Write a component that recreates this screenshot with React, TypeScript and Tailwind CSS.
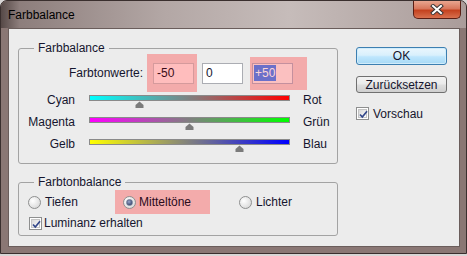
import React from 'react';

type Slider = { left: string; right: string; value: number; bar: string };

const sliders: Slider[] = [
    { left: 'Cyan', right: 'Rot', value: -50, bar: 'bg-[linear-gradient(to_right,#00ffff,#ff0000)]' },
    { left: 'Magenta', right: 'Grün', value: 0, bar: 'bg-[linear-gradient(to_right,#ff00ff,#00ff00)]' },
    { left: 'Gelb', right: 'Blau', value: 50, bar: 'bg-[linear-gradient(to_right,#ffff00,#0000ff)]' },
];

const Checkbox = () => (
    <span className="w-[13px] h-[13px] border border-[#8e8f8f] bg-white p-[1px] flex shrink-0">
        <span className="flex-1 border border-[#c4c4c4] bg-[linear-gradient(135deg,#d8d8d8,#fdfdfd)] relative">
            <svg className="absolute -left-[1px] -top-[1px]" width="11" height="11" viewBox="0 0 11 11">
                <path d="M2 5.5 L4.3 8 L9 2.2" fill="none" stroke="#34488a" strokeWidth="1.7" />
            </svg>
        </span>
    </span>
);

const Radio = ({ checked }: { checked?: boolean }) => (
    <span className="w-[13px] h-[13px] rounded-full border border-[#8e8f8f] bg-[radial-gradient(circle_at_35%_35%,#ffffff,#d0d0d0)] flex items-center justify-center shrink-0">
        {checked && (
            <span className="w-[7px] h-[7px] rounded-full border border-[#6d7894] bg-[radial-gradient(circle_at_40%_35%,#9aa8cc,#1c2a55)]" />
        )}
    </span>
);

// slider track with its value marker underneath
const SliderRow = ({ s }: { s: Slider }) => (
    <div className="flex h-[22px]">
        <span className="w-[56px] text-right leading-[14px] -mt-[2px]">{s.left}</span>
        <div className="ml-[14px] w-[201px] relative">
            <div className={`h-[6px] border border-[#8a8a8a] ${s.bar}`} />
            <svg
                className="absolute top-[6px]"
                style={{ left: 100 + s.value - 4.5 }}
                width="9"
                height="7"
                viewBox="0 0 9 7"
            >
                <path d="M4.5 0.5 L8.5 4 V7 H0.5 V4 Z" fill="#7b7b7b" />
            </svg>
        </div>
        <span className="ml-[13px] leading-[14px] -mt-[2px]">{s.right}</span>
    </div>
);

export default function App() {
    return (
        <div className="w-[467px] h-[256px] bg-[#d9d6d6] font-['Liberation_Sans',Arial,sans-serif] text-[12px] text-[#15152e]">
            <div className="w-[467px] h-[254px] rounded-t-[7px] border border-[#3a2f2e] bg-[#8a7774] flex flex-col overflow-hidden">
                {/* Title bar */}
                <div className="h-[27px] flex items-start bg-[linear-gradient(to_right,#564947_0%,#8d7e7c_4%,#b3a7a5_35%,#c6bcba_62%,#aa9c9a_100%)]">
                    <span className="ml-[7px] mt-[7px] leading-[14px] text-black">Farbbalance</span>
                    <button className="ml-auto mr-[5px] w-[48px] h-[18px] rounded-b-[5px] border border-t-0 border-[#5a1e14] bg-[linear-gradient(to_bottom,#e9a690_0%,#d8775c_45%,#c4421f_55%,#d8704e_100%)] flex items-center justify-center">
                        <svg width="14" height="11" viewBox="0 0 14 11">
                            <path d="M3 2 L11 9 M11 2 L3 9" stroke="#3b3535" strokeWidth="4" strokeLinecap="square" />
                            <path d="M3 2 L11 9 M11 2 L3 9" stroke="#ffffff" strokeWidth="2" strokeLinecap="square" />
                        </svg>
                    </button>
                </div>

                {/* Client area */}
                <div className="ml-[7px] w-[452px] h-[219px] border border-[#6a5d5b] bg-[#ececec] flex pl-[9px] pt-[12px]">
                    <div className="w-[320px] flex flex-col">
                        <fieldset className="border border-[#a3a3a3] rounded-[3px] p-0 pb-[2px]">
                            <legend className="ml-[15px] px-[4px] leading-[14px]">Farbbalance</legend>
                            <div className="flex items-center h-[38px] -mt-[1px]">
                                <span className="w-[124px] text-right">Farbtonwerte:</span>
                                <div className="ml-[4px] w-[50px] h-[38px] bg-[#f3abab] flex items-center pl-[6px]">
                                    <div className="w-[41px] h-[21px] border border-[#d59a9c] bg-[#ffbdbd] px-[3px] flex items-center text-[#3a0c18]">
                                        -50
                                    </div>
                                </div>
                                <div className="ml-[5px] w-[41px] h-[21px] border border-[#abadb3] bg-white px-[3px] flex items-center">
                                    0
                                </div>
                                <div className="ml-[7px] w-[57px] h-[33px] bg-[#f3abab] flex items-center pl-[2px]">
                                    <div className="w-[41px] h-[21px] border border-[#c4909e] bg-[#fbc0c0] px-[1px] flex items-center">
                                        <span className="bg-[#6b70c9] text-[#fbd6d6] px-[1px] leading-[16px]">+50</span>
                                    </div>
                                </div>
                            </div>
                            <div className="mt-[3px] flex flex-col">
                                {sliders.map((s) => (
                                    <SliderRow key={s.left} s={s} />
                                ))}
                            </div>
                        </fieldset>

                        <fieldset className="mt-[11px] border border-[#a3a3a3] rounded-[3px] p-0 pb-[5px]">
                            <legend className="ml-[15px] px-[4px] leading-[14px]">Farbtonbalance</legend>
                            <div className="mt-[1px] h-[24px] flex items-center pl-[9px]">
                                <label className="w-[87px] flex items-center gap-[4px]">
                                    <Radio />
                                    Tiefen
                                </label>
                                <label className="w-[95px] h-[24px] bg-[#f3abab] flex items-center pl-[8px] gap-[3px] text-[#2a0c1c]">
                                    <Radio checked />
                                    Mitteltöne
                                </label>
                                <label className="ml-[29px] flex items-center gap-[4px]">
                                    <Radio />
                                    Lichter
                                </label>
                            </div>
                            <div className="mt-[2px] h-[14px] flex items-center pl-[10px] gap-[2px]">
                                <Checkbox />
                                Luminanz erhalten
                            </div>
                        </fieldset>
                    </div>

                    {/* Buttons */}
                    <div className="ml-[18px] mt-[6px] w-[91px] flex flex-col">
                        <button className="h-[18px] rounded-[3px] border border-[#3c7fb1] bg-[linear-gradient(to_bottom,#eaf6fd_0%,#d9f0fc_45%,#bee6fd_55%,#a7d9f5_100%)] shadow-[inset_0_0_0_1px_#d0ecfb] leading-[14px]">
                            OK
                        </button>
                        <button className="mt-[11px] h-[17px] rounded-[3px] border border-[#707070] bg-[linear-gradient(to_bottom,#f2f2f2_0%,#ebebeb_45%,#dddddd_55%,#cfcfcf_100%)] leading-[14px]">
                            Zurücksetzen
                        </button>
                        <div className="mt-[14px] h-[13px] flex items-center gap-[4px]">
                            <Checkbox />
                            Vorschau
                        </div>
                    </div>
                </div>
            </div>
        </div>
    );
}
